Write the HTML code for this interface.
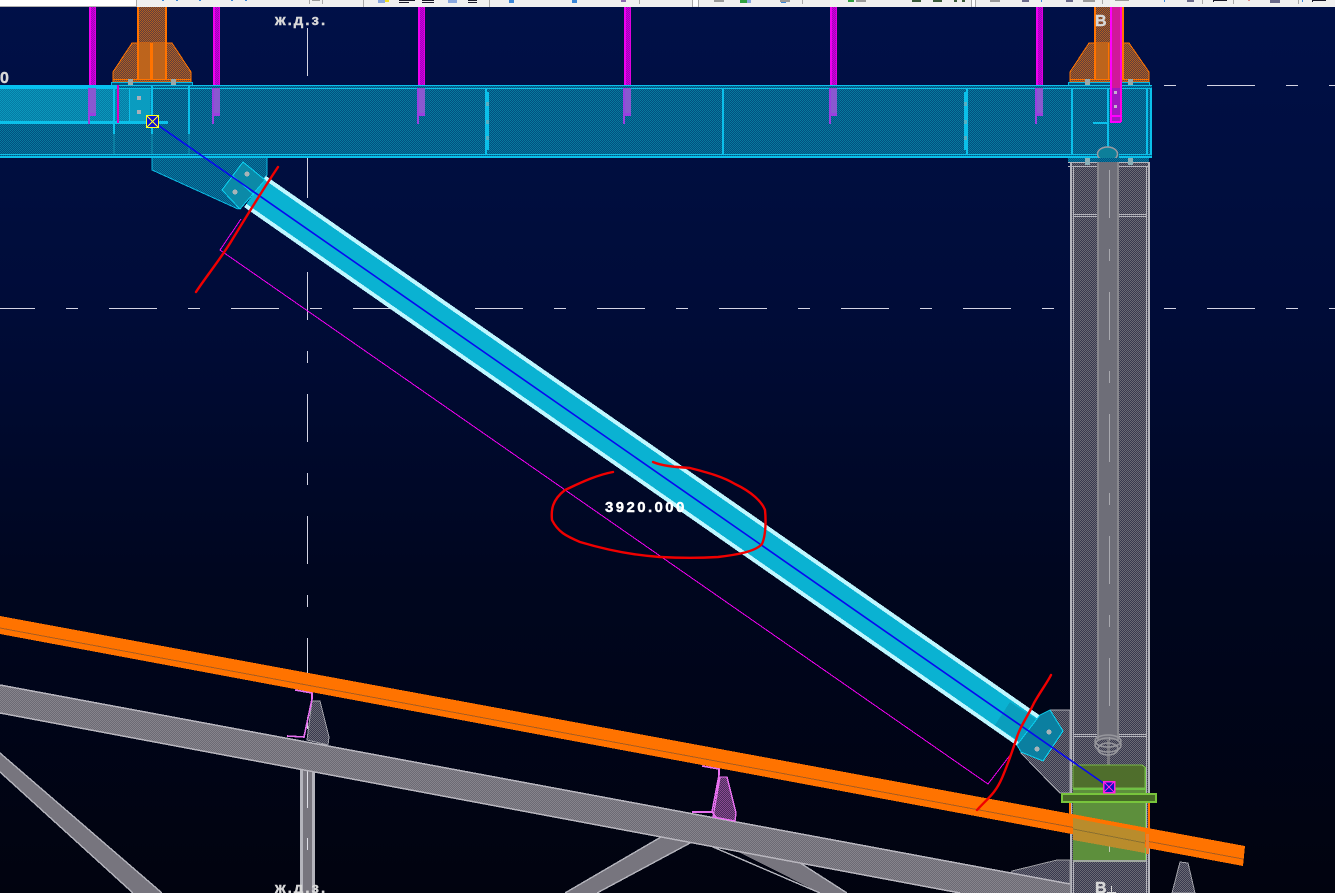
<!DOCTYPE html>
<html><head><meta charset="utf-8">
<style>
html,body{margin:0;padding:0;background:#000;width:1335px;height:893px;overflow:hidden}
svg{display:block;position:absolute;left:0;top:0}
text{font-family:"Liberation Sans","DejaVu Sans",sans-serif;font-weight:bold}
</style></head>
<body>
<svg width="1335" height="893" viewBox="0 0 1335 893" xmlns="http://www.w3.org/2000/svg">
<defs>
<linearGradient id="bg" x1="0" y1="0" x2="0" y2="1">
<stop offset="0" stop-color="#001048"/><stop offset=".35" stop-color="#000c38"/><stop offset=".65" stop-color="#00061f"/><stop offset="1" stop-color="#01030f"/>
</linearGradient>
<pattern id="hBand" width="2" height="2" patternUnits="userSpaceOnUse"><rect width="2" height="2" fill="#025080"/><rect width="1" height="1" fill="#077a9e"/><rect x="1" y="1" width="1" height="1" fill="#077a9e"/></pattern>
<pattern id="hBandL" width="2" height="2" patternUnits="userSpaceOnUse"><rect width="2" height="2" fill="#067aa4"/><rect width="1" height="1" fill="#0a98bc"/><rect x="1" y="1" width="1" height="1" fill="#0a98bc"/></pattern>
<pattern id="hOr" width="2" height="2" patternUnits="userSpaceOnUse"><rect width="2" height="2" fill="#5e3c40"/><rect width="1" height="1" fill="#b0601e"/><rect x="1" y="1" width="1" height="1" fill="#b0601e"/></pattern>
<pattern id="hGr" width="2" height="2" patternUnits="userSpaceOnUse"><rect width="2" height="2" fill="#38384e"/><rect width="1" height="1" fill="#6a6a74"/><rect x="1" y="1" width="1" height="1" fill="#6a6a74"/></pattern>
<pattern id="hChord" width="2" height="2" patternUnits="userSpaceOnUse"><rect width="2" height="2" fill="#6c6a74"/><rect width="1" height="1" fill="#86848c"/><rect x="1" y="1" width="1" height="1" fill="#86848c"/></pattern>
<pattern id="hMag" width="2" height="2" patternUnits="userSpaceOnUse"><rect width="2" height="2" fill="#a000c0"/><rect width="1" height="1" fill="#d000d8"/><rect x="1" y="1" width="1" height="1" fill="#d000d8"/></pattern>
<pattern id="hPur" width="2" height="2" patternUnits="userSpaceOnUse"><rect width="2" height="2" fill="#4a2c5c"/><rect width="1" height="1" fill="#8a4a90"/><rect x="1" y="1" width="1" height="1" fill="#8a4a90"/></pattern>
<g id="stud">
<rect x="0" y="7" width="7" height="78" fill="url(#hMag)"/><rect x="0" y="7" width="2" height="78" fill="#f000f0"/><rect x="6" y="7" width="1" height="78" fill="#e000e0"/>
<rect x="-1" y="88" width="8" height="27" fill="#8a58d0"/><rect x="-1" y="113" width="8" height="3" fill="#9a40e0"/><rect x="-1" y="88" width="2" height="36" fill="#9a40e0"/>
</g>
</defs>
<g shape-rendering="crispEdges">
<rect width="1335" height="893" fill="url(#bg)"/>

<!-- centre lines -->
<g stroke="#d4d4e4" stroke-width="1.2" fill="none" stroke-dasharray="48 31 12 31">
<line x1="-13" y1="308.5" x2="1335" y2="308.5"/>
<line x1="1207" y1="85.5" x2="1335" y2="85.5"/>
<line x1="307.5" y1="28" x2="307.5" y2="893"/>
</g>
<line x1="1164" y1="85.5" x2="1176" y2="85.5" stroke="#d4d4e4" stroke-width="1.2"/>

<!-- upper gusset (behind) -->
<path d="M152 157V170L238 209L267 175V157Z" fill="url(#hBand)" stroke="#0bb8e0" stroke-width="1"/>

<!-- lower grey column -->
<rect x="1071" y="157" width="78" height="736" fill="url(#hGr)"/>
<g fill="#b4b4bc">
<rect x="1070" y="162" width="2" height="731"/><rect x="1073" y="166" width="1" height="727"/>
<rect x="1146" y="166" width="1" height="727"/><rect x="1148" y="162" width="2" height="731"/>
<rect x="1068" y="162" width="81" height="1"/><rect x="1068" y="166" width="81" height="1"/>
<rect x="1073" y="214" width="73" height="1"/><rect x="1073" y="216" width="73" height="1"/>
<rect x="1073" y="734" width="73" height="1"/><rect x="1073" y="736" width="73" height="1"/>
</g>
<rect x="1098" y="154" width="21" height="586" fill="#6e6e78"/>
<rect x="1097" y="154" width="2" height="586" fill="#88888e"/><rect x="1117" y="154" width="2" height="586" fill="#88888e"/>
<line x1="1109.5" y1="170" x2="1109.5" y2="808" stroke="#a8a8ae" stroke-width="1" stroke-dasharray="48 31 12 31"/>
<rect x="1107" y="740" width="3" height="68" fill="#7a7a80"/>
<g shape-rendering="auto" fill="none" stroke="#96969c" stroke-width="1.6">
<ellipse cx="1108" cy="741" rx="13" ry="6"/><ellipse cx="1108" cy="745" rx="13" ry="7"/><ellipse cx="1108" cy="749" rx="10" ry="6"/>
</g>

<!-- grey bottom gusset -->
<path d="M1050 710H1070V793H1060L1050 783L1021 753Z" fill="url(#hGr)" stroke="#a8a8b0" stroke-width="1"/>

<!-- lower block + chord struts -->
<path d="M1012 871L1057 860H1070V893H1000Z" fill="url(#hGr)" stroke="#9a9aa0" stroke-width="1"/>
<path d="M0 753L162 893H133L0 772Z" fill="#77757e"/>
<path d="M0 753L162 893M0 772L133 893" stroke="#b4b4bc" stroke-width="1.4" fill="none"/>
<path d="M673 830L565 893H597L705 835Z" fill="#77757e"/>
<path d="M673 830L565 893M705 835L597 893" stroke="#b4b4bc" stroke-width="1.4" fill="none"/>
<path d="M705 835L780 850L847 893H820Z" fill="#77757e"/>
<path d="M713 847L820 893M780 850L847 893" stroke="#b4b4bc" stroke-width="1.4" fill="none"/>
<rect x="301" y="769" width="14" height="124" fill="#77757e"/>
<rect x="300" y="769" width="3" height="124" fill="#b4b4bc"/><rect x="312" y="769" width="3" height="124" fill="#b4b4bc"/>
<line x1="307.5" y1="760" x2="307.5" y2="808" stroke="#e0e0e8" stroke-width="1"/>
<line x1="307.5" y1="838" x2="307.5" y2="850" stroke="#e0e0e8" stroke-width="1"/>
<path d="M0 685L1070 884V893H960L0 713Z" fill="url(#hChord)"/>
<path d="M0 685L1070 884M0 713L960 893" stroke="#b8b6be" stroke-width="1.5" fill="none"/>

<!-- brackets -->
<path d="M312 701H320L329 737L328 745L307 740Z" fill="url(#hGr)" stroke="#a0a0a8" stroke-width="1"/>
<path d="M295 690L312 693V699L304 737L287 736" fill="none" stroke="#e870f0" stroke-width="1.6"/>
<path d="M720 777H727L736 813L735 821L713 817Z" fill="url(#hPur)" stroke="#e870f0" stroke-width="1.4"/>
<path d="M702 766L719 769V775L712 812L692 812M712 812L716 817" fill="none" stroke="#e870f0" stroke-width="1.6"/>
<path d="M1180 862L1188 863L1195 893H1172Z" fill="url(#hGr)" stroke="#a0a0a8" stroke-width="1"/>

<!-- upper orange columns -->
<rect x="137" y="7" width="30" height="38" fill="url(#hOr)"/>
<rect x="1094" y="7" width="30" height="38" fill="url(#hOr)"/>
<path d="M113 82V72L132 43H172L191 72V82Z" fill="url(#hOr)" stroke="#ff7300" stroke-width="1"/>
<path d="M1070 82V72L1089 43H1129L1149 72V82Z" fill="url(#hOr)" stroke="#ff7300" stroke-width="1"/>
<rect x="138" y="43" width="28" height="36" fill="#bd641c"/>
<rect x="1095" y="43" width="28" height="36" fill="#bd641c"/>
<g fill="#ff7300">
<rect x="137" y="7" width="2" height="73"/><rect x="165" y="7" width="2" height="73"/><rect x="150" y="43" width="2" height="36"/><rect x="152" y="43" width="1" height="36"/>
<rect x="1094" y="7" width="2" height="73"/><rect x="1122" y="7" width="2" height="73"/><rect x="1108" y="43" width="1" height="36"/>
<rect x="113" y="79" width="78" height="1"/><rect x="1070" y="79" width="79" height="1"/>
</g>
<rect x="112" y="82" width="80" height="3" fill="#04507e"/>
<rect x="1069" y="82" width="81" height="3" fill="#04507e"/>
<path d="M111.500 85V82.500H192.500V85M1068.500 85V82.500H1149.500V85" fill="none" stroke="#0bb8e0" stroke-width="1"/>
<g fill="#9aa8a8"><rect x="128" y="79" width="5" height="6"/><rect x="171" y="79" width="5" height="6"/><rect x="1085" y="79" width="5" height="6"/><rect x="1128" y="79" width="5" height="6"/></g>

<!-- band -->
<rect x="0" y="86" width="1152" height="71" fill="url(#hBand)"/>
<rect x="0" y="88" width="152" height="34" fill="url(#hBandL)"/>
<rect x="129" y="88" width="21" height="34" fill="#0a9cc0"/>
<rect x="0" y="85" width="118" height="4" fill="#06c0f0"/>
<g fill="#0bc0ea">
<rect x="118" y="85" width="1034" height="1"/><rect x="118" y="88" width="1034" height="1"/>
<rect x="0" y="154" width="1152" height="1"/><rect x="0" y="156" width="1152" height="2"/>
<rect x="0" y="121" width="168" height="3"/>
<rect x="113" y="86" width="2" height="48"/><rect x="151" y="86" width="2" height="48"/><rect x="188" y="86" width="2" height="48"/>
<rect x="129" y="88" width="1" height="34"/>
<rect x="485" y="88" width="2" height="66"/><rect x="487" y="92" width="2" height="58"/>
<rect x="722" y="88" width="2" height="66"/>
<rect x="964" y="92" width="2" height="58"/><rect x="966" y="88" width="2" height="66"/>
<rect x="1071" y="88" width="2" height="67"/><rect x="1146" y="88" width="2" height="67"/><rect x="1150" y="88" width="2" height="67"/>
<rect x="1107" y="88" width="2" height="67"/>
<rect x="1093" y="122" width="16" height="2"/>
</g>
<g fill="#0a7ea2"><rect x="113" y="134" width="2" height="20"/><rect x="151" y="134" width="2" height="20"/><rect x="188" y="134" width="2" height="20"/></g>
<rect x="117" y="85" width="2" height="38" fill="#e000c0"/>
<g fill="#58b0c4">
<rect x="486" y="102" width="3" height="4"/><rect x="486" y="120" width="3" height="4"/><rect x="486" y="136" width="3" height="4"/>
<rect x="964" y="102" width="3" height="4"/><rect x="964" y="120" width="3" height="4"/><rect x="964" y="136" width="3" height="4"/>
</g>
<g fill="#a8b0b8"><rect x="137" y="96" width="4" height="4"/><rect x="137" y="110" width="4" height="4"/></g>

<!-- studs -->
<use href="#stud" x="89"/><use href="#stud" x="213"/><use href="#stud" x="418"/>
<use href="#stud" x="624"/><use href="#stud" x="830"/><use href="#stud" x="1036"/>

<!-- right magenta strut -->
<rect x="1110" y="7" width="12" height="81" fill="#d0189a"/>
<rect x="1110" y="88" width="12" height="34" fill="#a018c0"/>
<rect x="1110" y="7" width="2" height="115" fill="#ff00ff"/><rect x="1120" y="7" width="2" height="115" fill="#ff00e0"/>
<rect x="1110" y="115" width="12" height="2" fill="#ff00ff"/><rect x="1110" y="121" width="11" height="2" fill="#ff00ff"/>
<g fill="#c8b0d0"><rect x="1114" y="91" width="3" height="3"/><rect x="1114" y="105" width="3" height="3"/></g>

<!-- column top over band -->
<rect x="1098" y="154" width="21" height="4" fill="#0a6a88"/>
<ellipse cx="1107.500" cy="154" rx="10" ry="7" fill="#0d7f9a" stroke="#9a9aa0" stroke-width="1.500" shape-rendering="auto"/>
<rect x="1068" y="158" width="81" height="4" fill="url(#hBand)"/>
<g fill="#8ab0b8"><rect x="1085" y="158" width="5" height="7"/><rect x="1128" y="158" width="5" height="7"/></g>

<!-- brace -->
<g fill="none">
<line x1="255" y1="191.500" x2="1029" y2="731" stroke="#bff7ff" stroke-width="38"/>
<line x1="255" y1="191.500" x2="1029" y2="731" stroke="#0ab2d2" stroke-width="30"/>
</g>

<!-- end plates -->
<path d="M243 162L265 180L240 209L222 190Z" fill="#0b8aa8" stroke="#0bd0f0" stroke-width="1"/>
<line x1="233" y1="176" x2="254" y2="195" stroke="#0bd0f0" stroke-width="1"/>
<g fill="#a8b4b8"><circle cx="247" cy="174" r="2.500"/><circle cx="235" cy="192" r="2.500"/></g>
<path d="M1010 702L1040 722L1025 745L995 725Z" fill="#0a8aa8" fill-opacity=".5"/>
<path d="M1040 715L1050 710L1063 731L1043 761L1021 752L1017 745Z" fill="#0b7fa0" stroke="#0bd0f0" stroke-width="1"/>
<g fill="#a8b4b8"><circle cx="1049" cy="732" r="2.500"/><circle cx="1037" cy="749" r="2.500"/></g>

<!-- green base below orange -->
<rect x="1069" y="802" width="2" height="30" fill="#ff7300"/><rect x="1148" y="802" width="2" height="36" fill="#ff7300"/>
<rect x="1073" y="790" width="72" height="71" fill="#5d8f3c"/>
<path d="M1074 765H1142L1145 767V788H1073V767Z" fill="#4f6e2c" stroke="#79b548" stroke-width="1"/>
<rect x="1073" y="788" width="72" height="2" fill="#6fc044"/>
<rect x="1145" y="767" width="1" height="94" fill="#6fc044"/>
<rect x="1073" y="860" width="73" height="2" fill="#a0a8a0"/>
<line x1="1109.500" y1="840" x2="1109.500" y2="852" stroke="#c0c8b0" stroke-width="1"/>
<rect x="1061" y="793" width="96" height="10" fill="#78c43c"/>
<rect x="1063" y="795" width="92" height="6" fill="#466a26"/>

<!-- orange beam -->
<path d="M0 616L1245 846L1243 866L0 634Z" fill="#ff7300"/>
<line x1="0" y1="628" x2="1243" y2="859" stroke="#a85c20" stroke-width="1"/>
<path d="M1073 818L1145 832V853L1073 840Z" fill="#b98c2c"/>
<line x1="1073" y1="829" x2="1145" y2="843" stroke="#8a7030" stroke-width="1"/>
<rect x="1146" y="834" width="3" height="20" fill="#e88030"/>

<!-- blue axis and end markers -->
<line x1="152" y1="121" x2="1109" y2="787" stroke="#0808f0" stroke-width="1.600" shape-rendering="auto"/>
<rect x="146.500" y="115.500" width="12" height="12" fill="#1010d0" stroke="#ffff20" stroke-width="1"/>
<path d="M147 116L158 127M158 116L147 127" stroke="#ffff20" stroke-width="1"/>
<rect x="1103.500" y="781.500" width="11" height="11" fill="#1010c0" stroke="#ff20e0" stroke-width="1.500"/>
<path d="M1104 792L1114 782M1104 782L1114 792" stroke="#ff20e0" stroke-width="1"/>
</g>

<!-- dimension line -->
<path d="M241 219L220 250L988 784L1011 754" fill="none" stroke="#f000f0" stroke-width="1" shape-rendering="crispEdges"/>

<!-- red annotations -->
<g fill="none" stroke="#f00000" stroke-width="2.400" stroke-linecap="round" stroke-linejoin="round">
<path d="M196 292C205 278 222 257 232 240C245 219 258 197 278 167"/>
<path d="M977 810C988 798 995 794 1002 778C1008 764 1012 752 1016 740C1020 726 1028 716 1034 703C1040 692 1047 683 1051 675"/>
<path d="M613 472C596 475 578 484 565 490C552 500 551 510 552 520C558 532 566 536 580 542C600 548 630 555 660 557C680 558 700 558 718 557C735 555 755 552 762 544C766 535 766 520 765 510C762 502 752 492 735 484C722 476 705 472 690 468C675 467 662 466 653 462"/>
</g>

<!-- text -->
<g fill="#d8d8d8" stroke="#d8d8d8" stroke-width=".4">
<text x="275" y="25" font-size="15" letter-spacing="2">ж.д.з.</text>
<text x="275" y="893" font-size="15" letter-spacing="2">ж.д.з.</text>
<text x="1095" y="26" font-size="16">В</text>
<text x="1095" y="893" font-size="16">В</text>
<text x="0" y="83" font-size="16">0</text>
</g>
<rect x="1107" y="892" width="9" height="1" fill="#d8d8d8"/>
<rect x="1111" y="886" width="1" height="7" fill="#d8d8d8"/>
<text x="605" y="512" font-size="15" letter-spacing="2.400" fill="#ffffff" stroke="#ffffff" stroke-width=".4">3920.000</text>

<!-- toolbar -->
<g shape-rendering="crispEdges">
<rect x="0" y="0" width="1335" height="7" fill="#f0f0f0"/>
<rect x="0" y="0" width="136" height="6" fill="#ffffff"/>
<rect x="0" y="6" width="137" height="1" fill="#b0b0b0"/>
<rect x="136" y="0" width="1" height="7" fill="#a8a8a8"/>
<g fill="#a8a8a8">
<rect x="309" y="0" width="1" height="4"/><rect x="322" y="0" width="1" height="4"/><rect x="363" y="0" width="1" height="7"/>
<rect x="489" y="0" width="1" height="7"/><rect x="639" y="0" width="1" height="4"/>
<rect x="692" y="0" width="1" height="7"/><rect x="698" y="0" width="1" height="7"/>
<rect x="802" y="0" width="1" height="4"/><rect x="971" y="0" width="1" height="7"/><rect x="975" y="0" width="1" height="7"/>
<rect x="1102" y="0" width="1" height="4"/><rect x="1202" y="0" width="1" height="4"/><rect x="1233" y="0" width="1" height="4"/><rect x="1298" y="0" width="1" height="4"/>
</g>
<rect x="693" y="0" width="5" height="6" fill="#ffffff"/><rect x="972" y="0" width="3" height="6" fill="#ffffff"/>
<g fill="#3a86d8">
<rect x="162" y="0" width="2" height="1"/><rect x="176" y="0" width="2" height="1"/><rect x="199" y="0" width="2" height="1"/><rect x="231" y="0" width="2" height="1"/><rect x="245" y="0" width="2" height="1"/>
<rect x="509" y="0" width="5" height="3"/><rect x="572" y="0" width="5" height="3"/><rect x="781" y="0" width="5" height="3"/>
<rect x="1041" y="0" width="1" height="2"/><rect x="1164" y="0" width="1" height="2"/><rect x="1302" y="0" width="1" height="2"/>
</g>
<g fill="#8aa8e0"><rect x="378" y="0" width="7" height="3"/><rect x="448" y="0" width="9" height="3"/><rect x="742" y="0" width="9" height="3"/></g>
<rect x="385" y="0" width="4" height="2" fill="#f0e020"/>
<g fill="#181828">
<rect x="399" y="0" width="16" height="1"/><rect x="399" y="2" width="10" height="1"/><rect x="422" y="0" width="12" height="1"/><rect x="422" y="2" width="12" height="1"/><rect x="468" y="0" width="9" height="1"/><rect x="468" y="2" width="9" height="1"/>
<rect x="1213" y="0" width="14" height="1"/><rect x="1213" y="1" width="1" height="1"/><rect x="1312" y="0" width="14" height="1"/><rect x="1312" y="1" width="1" height="1"/>
</g>
<g fill="#9a9a9a"><rect x="312" y="0" width="8" height="1"/><rect x="714" y="0" width="10" height="2"/><rect x="780" y="0" width="10" height="2"/><rect x="856" y="0" width="10" height="2"/><rect x="990" y="0" width="10" height="2"/><rect x="1083" y="0" width="12" height="2"/><rect x="1115" y="0" width="14" height="1"/></g>
<g fill="#6a6a8a"><rect x="1022" y="0" width="7" height="2"/><rect x="1066" y="0" width="7" height="2"/><rect x="1187" y="0" width="7" height="2"/><rect x="1270" y="0" width="10" height="3"/></g>
<g fill="#30a040"><rect x="740" y="0" width="7" height="3"/><rect x="848" y="0" width="6" height="2"/></g>
<g fill="#3a5a3a"><rect x="912" y="0" width="9" height="2"/><rect x="933" y="0" width="9" height="2"/><rect x="954" y="0" width="3" height="2"/><rect x="962" y="0" width="3" height="2"/></g>
<rect x="621" y="0" width="5" height="2" fill="#8a6ab0"/>
<rect x="1248" y="0" width="2" height="1" fill="#e09090"/>
</g>
</svg>
</body></html>
